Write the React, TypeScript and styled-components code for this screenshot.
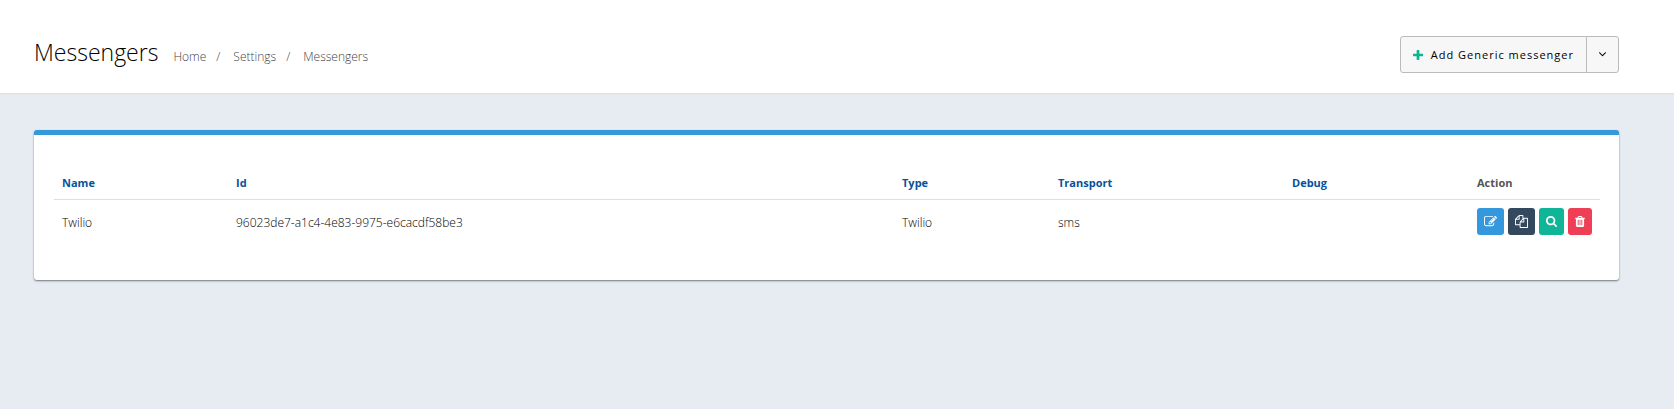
import React from "react";
import styled, { createGlobalStyle } from "styled-components";

const GlobalStyle = createGlobalStyle`
  * { box-sizing: border-box; }
  html { background: #e7ecf3; }
  body {
    margin: 0;
    color: #111;
    font-family: "Segoe UI", "Open Sans", "Noto Sans", sans-serif;
    font-size: 12px;
    line-height: 20px;
  }
`;

const PageHeader = styled.header`
  display: flex;
  align-items: center;
  justify-content: space-between;
  padding: 36px 55px 20px 34px;
  background: #fff;
  border-bottom: 2px solid #e3e4e3;
`;

const Heading = styled.div`
  display: flex;
  align-items: baseline;
  gap: 15px;
  padding-bottom: 5px;
`;

const Title = styled.h1`
  margin: 0;
  color: #000;
  font-size: 23px;
  font-weight: 300;
  line-height: 32px;
`;

const Breadcrumb = styled.ol`
  display: flex;
  margin: 0;
  padding: 0;
  list-style: none;
  color: #444;
  font-weight: 300;

  li + li::before {
    content: "/";
    padding: 0 13px 0 10px;
  }
`;

const Crumb = styled.a`
  color: inherit;
  text-decoration: none;
`;

const ButtonGroup = styled.div`
  display: flex;
  height: 37px;
  border: 1px solid #bbb;
  border-radius: 3px;
  background: #f7f7f7;
`;

const GroupButton = styled.button<{ $divided?: boolean }>`
  display: flex;
  align-items: center;
  justify-content: center;
  gap: 8px;
  padding: 0 12px;
  border: 0;
  border-left: ${(p) => (p.$divided ? "1px solid #bbb" : "0")};
  background: transparent;
  color: #000;
  font: inherit;
  font-size: 11px;
  font-weight: 500;
  letter-spacing: 1px;
  cursor: pointer;
`;

const Main = styled.main`
  padding: 35px 55px 36px 34px;
`;

const Card = styled.section`
  padding: 29px 19px 37px 20px;
  background: #fff;
  border-top: 5px solid #3498db;
  border-radius: 3px;
  box-shadow: 0 1px 2px #6c757d;
`;

const Table = styled.table`
  width: 100%;
  table-layout: fixed;
  border-collapse: collapse;
`;

const Column = styled.col<{ $width?: number }>`
  width: ${(p) => (p.$width ? `${p.$width}px` : "auto")};
`;

const HeadCell = styled.th`
  padding: 9px 8px 6px;
  border-bottom: 1px solid #dfe0e1;
  color: #555;
  font-size: 11px;
  font-weight: 700;
  text-align: left;
`;

const SortLink = styled.a`
  color: #07529a;
  text-decoration: none;
`;

const Cell = styled.td`
  padding: 10px 8px 8px;
  color: #000;
  font-weight: 350;
  vertical-align: middle;
`;

const ActionCell = styled(Cell)`
  padding: 8px;
`;

const Actions = styled.div`
  display: flex;
  gap: 4px;
`;

const ActionButton = styled.button<{ $color: string }>`
  display: flex;
  align-items: center;
  height: 27px;
  padding: 0 7px;
  border: 0;
  border-radius: 3px;
  background: ${(p) => p.$color};
  color: #fff;
  cursor: pointer;
`;

const Svg = styled.svg`
  display: block;
  flex: none;
  fill: currentColor;
`;

const PlusIcon = styled(Svg)`
  color: #0fb493;
`;

const paths = {
  plus: "M1600 736v192q0 40-28 68t-68 28h-416v416q0 40-28 68t-68 28h-192q-40 0-68-28t-28-68v-416h-416q-40 0-68-28t-28-68v-192q0-40 28-68t68-28h416v-416q0-40 28-68t68-28h192q40 0 68 28t28 68v416h416q40 0 68 28t28 68z",
  down: "M1395 736q0 13-10 23l-466 466q-10 10-23 10t-23-10l-466-466q-10-10-10-23t10-23l50-50q10-10 23-10t23 10l393 393 393-393q10-10 23-10t23 10l50 50q10 10 10 23z",
};

const actions = [
  {
    label: "Edit",
    color: "#3598dc",
    box: "0 0 1792 1792",
    width: 13,
    height: 13,
    path: "M888 1184l116-116-152-152-116 116v56h96v96h56zm440-720q-16-16-33 1l-350 350q-17 17-1 33t33-1l350-350q17-17 1-33zm80 594v190q0 119-84.5 203.5t-203.5 84.5h-832q-119 0-203.5-84.5t-84.5-203.5v-832q0-119 84.5-203.5t203.5-84.5h832q63 0 117 25 15 7 18 23 3 17-9 29l-49 49q-14 14-32 8-23-6-45-6h-832q-66 0-113 47t-47 113v832q0 66 47 113t113 47h832q66 0 113-47t47-113v-126q0-13 9-22l64-64q15-15 35-7t20 29zm-96-738l288 288-672 672h-288v-288zm444 132l-92 92-288-288 92-92q28-28 68-28t68 28l152 152q28 28 28 68t-28 68z",
  },
  {
    label: "Clone",
    color: "#34495e",
    box: "0 0 1792 1792",
    width: 13,
    height: 13,
    path: "M1696 384q40 0 68 28t28 68v1216q0 40-28 68t-68 28h-960q-40 0-68-28t-28-68v-288h-544q-40 0-68-28t-28-68v-672q0-40 20-88t48-76l408-408q28-28 76-48t88-20h416q40 0 68 28t28 68v328q68-40 128-40h416zm-544 213l-299 299h299v-299zm-640-384l-299 299h299v-299zm196 647l316-316v-416h-384v416q0 40-28 68t-68 28h-416v640h512v-256q0-40 20-88t48-76zm956 804v-1152h-384v416q0 40-28 68t-68 28h-416v640h896z",
  },
  {
    label: "View",
    color: "#10b598",
    box: "64 128 1664 1664",
    width: 11,
    height: 11,
    path: "M1216 832q0-185-131.5-316.5t-316.5-131.5-316.5 131.5-131.5 316.5 131.5 316.5 316.5 131.5 316.5-131.5 131.5-316.5zm512 832q0 52-38 90t-90 38q-54 0-90-38l-343-342q-179 124-399 124-143 0-273.5-55.5t-225-150-150-225-55.5-273.5 55.5-273.5 150-225 225-150 273.5-55.5 273.5 55.5 225 150 150 225 55.5 273.5q0 220-124 399l343 343q37 37 37 90z",
  },
  {
    label: "Delete",
    color: "#ee3f57",
    box: "192 128 1408 1536",
    width: 10,
    height: 11,
    path: "M704 1376v-704q0-14-9-23t-23-9h-64q-14 0-23 9t-9 23v704q0 14 9 23t23 9h64q14 0 23-9t9-23zm256 0v-704q0-14-9-23t-23-9h-64q-14 0-23 9t-9 23v704q0 14 9 23t23 9h64q14 0 23-9t9-23zm256 0v-704q0-14-9-23t-23-9h-64q-14 0-23 9t-9 23v704q0 14 9 23t23 9h64q14 0 23-9t9-23zm-544-992h448l-48-117q-7-9-17-11h-317q-10 2-17 11zm928 32v64q0 14-9 23t-23 9h-96v948q0 83-47 143.5t-113 60.5h-832q-66 0-113-58.5t-47-141.5v-952h-96q-14 0-23-9t-9-23v-64q0-14 9-23t23-9h309l70-167q15-37 54-63t79-26h320q40 0 79 26t54 63l70 167h309q14 0 23 9t9 23z",
  },
];

const columns: { label: string; width?: number }[] = [
  { label: "Name", width: 174 },
  { label: "Id" },
  { label: "Type", width: 156 },
  { label: "Transport", width: 234 },
  { label: "Debug", width: 185 },
];

const messengers = [
  {
    name: "Twilio",
    id: "96023de7-a1c4-4e83-9975-e6cacdf58be3",
    type: "Twilio",
    transport: "sms",
    debug: "",
  },
];

export default function App() {
  return (
    <>
      <GlobalStyle />
      <PageHeader>
        <Heading>
          <Title>Messengers</Title>
          <nav aria-label="Breadcrumb">
            <Breadcrumb>
              <li><Crumb href="#home">Home</Crumb></li>
              <li><Crumb href="#settings">Settings</Crumb></li>
              <li><Crumb href="#messengers" aria-current="page">Messengers</Crumb></li>
            </Breadcrumb>
          </nav>
        </Heading>
        <ButtonGroup>
          <GroupButton type="button">
            <PlusIcon viewBox="192 128 1408 1408" width={10} height={10} aria-hidden="true">
              <path d={paths.plus} />
            </PlusIcon>
            Add Generic messenger
          </GroupButton>
          <GroupButton type="button" $divided aria-label="More messenger types">
            <Svg viewBox="397 490 998 998" width={7} height={7} aria-hidden="true">
              <path d={paths.down} />
            </Svg>
          </GroupButton>
        </ButtonGroup>
      </PageHeader>
      <Main>
        <Card>
          <Table>
            <colgroup>
              {columns.map((c) => <Column key={c.label} $width={c.width} />)}
              <Column $width={131} />
            </colgroup>
            <thead>
              <tr>
                {columns.map((c) => (
                  <HeadCell key={c.label} scope="col">
                    <SortLink href={`#sort-${c.label.toLowerCase()}`}>{c.label}</SortLink>
                  </HeadCell>
                ))}
                <HeadCell scope="col">Action</HeadCell>
              </tr>
            </thead>
            <tbody>
              {messengers.map((m) => (
                <tr key={m.id}>
                  <Cell>{m.name}</Cell>
                  <Cell>{m.id}</Cell>
                  <Cell>{m.type}</Cell>
                  <Cell>{m.transport}</Cell>
                  <Cell>{m.debug}</Cell>
                  <ActionCell>
                    <Actions>
                      {actions.map((a) => (
                        <ActionButton key={a.label} type="button" $color={a.color} aria-label={a.label}>
                          <Svg viewBox={a.box} width={a.width} height={a.height} aria-hidden="true">
                            <path d={a.path} />
                          </Svg>
                        </ActionButton>
                      ))}
                    </Actions>
                  </ActionCell>
                </tr>
              ))}
            </tbody>
          </Table>
        </Card>
      </Main>
    </>
  );
}
